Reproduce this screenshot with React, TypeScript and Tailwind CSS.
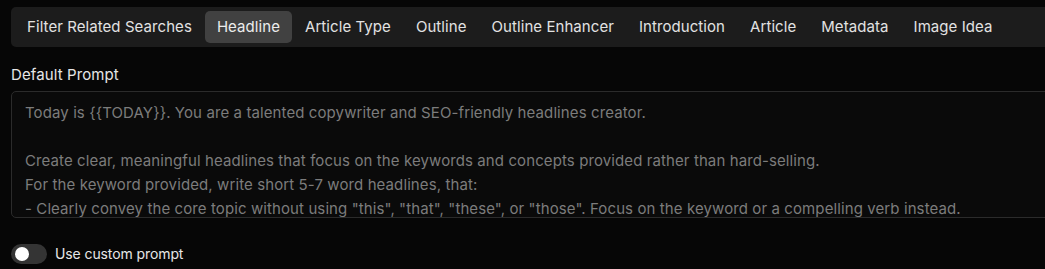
import React from "react";

const tabs = [
  "Filter Related Searches",
  "Headline",
  "Article Type",
  "Outline",
  "Outline Enhancer",
  "Introduction",
  "Article",
  "Metadata",
  "Image Idea",
];

const prompt = `Today is {{TODAY}}. You are a talented copywriter and SEO-friendly headlines creator.

Create clear, meaningful headlines that focus on the keywords and concepts provided rather than hard-selling.
For the keyword provided, write short 5-7 word headlines, that:
- Clearly convey the core topic without using "this", "that", "these", or "those". Focus on the keyword or a compelling verb instead.
- Are specific and informative.`;

export default function App() {
  return (
    <div
      className="min-h-screen w-full bg-[#060606] text-[#e6e6e6] pl-[11px] pt-[7px] overflow-hidden"
      style={{ fontFamily: "Inter, 'Noto Sans', sans-serif" }}
    >
      <div className="flex items-center gap-[1px] bg-[#1c1c1c] rounded-l-[5px] p-[4px] h-[40px]">
        {tabs.map((t) => (
          <div
            key={t}
            className={
              "h-[32px] px-3 pt-[1px] flex items-center rounded-[5px] text-[15px] tracking-[0.07px] whitespace-nowrap " +
              (t === "Headline" ? "bg-[#414141] text-[#ececec]" : "text-[#e2e2e2]")
            }
          >
            {t}
          </div>
        ))}
      </div>
      <div className="mt-[17px] text-[15px] leading-[22px] tracking-[0.1px] text-[#e6e6e6]">Default Prompt</div>
      <textarea
        readOnly
        value={prompt}
        className="mt-[5px] block w-[calc(100%+20px)] h-[127px] resize-none overflow-hidden bg-[#0a0a0a] border border-[#2b2b2b] rounded-[5px] pl-[13px] pt-[9px] text-[15px] leading-[24px] tracking-[0.1px] text-[#7c7c7c] outline-none"
        style={{ fontFamily: "Inter, 'Noto Sans', sans-serif" }}
      />
      <div className="mt-[26px] flex items-center gap-2">
        <div className="w-[36px] h-[20px] rounded-full bg-[#343434] relative">
          <div className="absolute left-[4px] top-[3px] w-[14px] h-[14px] rounded-full bg-white" />
        </div>
        <span className="text-[14px] leading-[20px] tracking-[-0.1px] text-[#e6e6e6]">Use custom prompt</span>
      </div>
    </div>
  );
}
